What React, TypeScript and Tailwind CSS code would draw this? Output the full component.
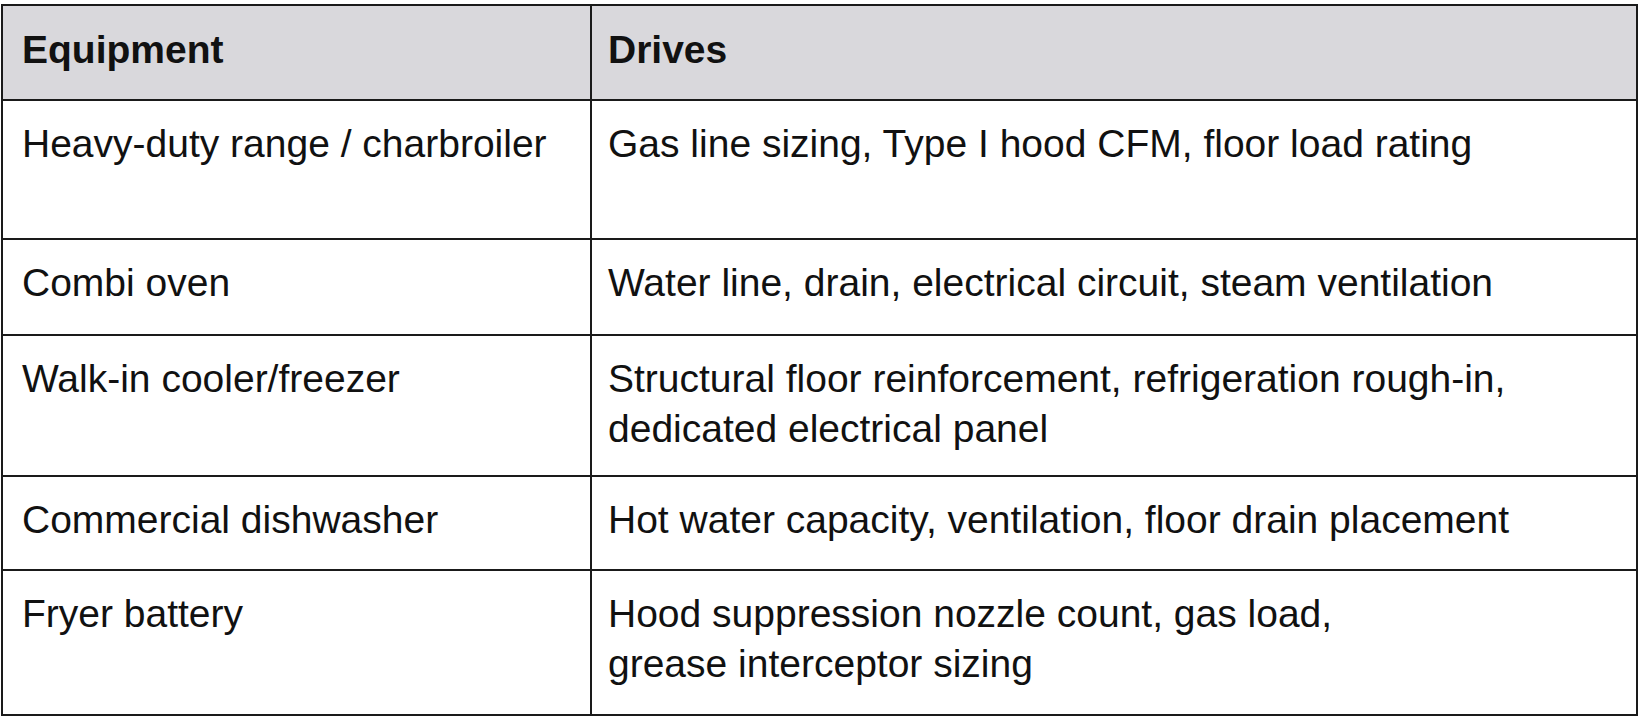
import React from "react";

const rows: { eq: string; drives: React.ReactNode }[] = [
  { eq: "Heavy-duty range / charbroiler", drives: "Gas line sizing, Type I hood CFM, floor load rating" },
  { eq: "Combi oven", drives: "Water line, drain, electrical circuit, steam ventilation" },
  {
    eq: "Walk-in cooler/freezer",
    drives: (
      <>
        Structural floor reinforcement, refrigeration rough-in,
        <br />
        dedicated electrical panel
      </>
    ),
  },
  { eq: "Commercial dishwasher", drives: "Hot water capacity, ventilation, floor drain placement" },
  {
    eq: "Fryer battery",
    drives: (
      <>
        Hood suppression nozzle count, gas load,
        <br />
        grease interceptor sizing
      </>
    ),
  },
];

const heights = ["h-[139px]", "h-[96px]", "h-[141px]", "h-[94px]", "h-[143px]"];

export default function App() {
  return (
    <div
      className="w-[1640px] h-[722px] bg-white pt-[4px] pl-[1px] text-[#111111]"
      style={{ fontFamily: '"Liberation Sans", Arial, Helvetica, sans-serif' }}
    >
      <div className="w-[1637px] border-2 border-[#1a1a1a] grid grid-cols-[589px_1fr] text-[39px] leading-[50px]">
        <div className="bg-[#d9d8dc] border-r-2 border-b-2 border-[#1a1a1a] h-[95px] pl-[19px] pt-[19px] font-bold">
          Equipment
        </div>
        <div className="bg-[#d9d8dc] border-b-2 border-[#1a1a1a] h-[95px] pl-[16px] pt-[19px] font-bold">
          Drives
        </div>
        {rows.map((r, i) => {
          const last = i === rows.length - 1;
          const h = heights[i];
          return (
            <React.Fragment key={i}>
              <div
                className={`border-r-2 border-[#1a1a1a] pl-[19px] pt-[18px] ${h} ${last ? "" : "border-b-2"}`}
              >
                {r.eq}
              </div>
              <div className={`border-[#1a1a1a] pl-[16px] pt-[18px] ${h} ${last ? "" : "border-b-2"}`}>
                {r.drives}
              </div>
            </React.Fragment>
          );
        })}
      </div>
    </div>
  );
}
